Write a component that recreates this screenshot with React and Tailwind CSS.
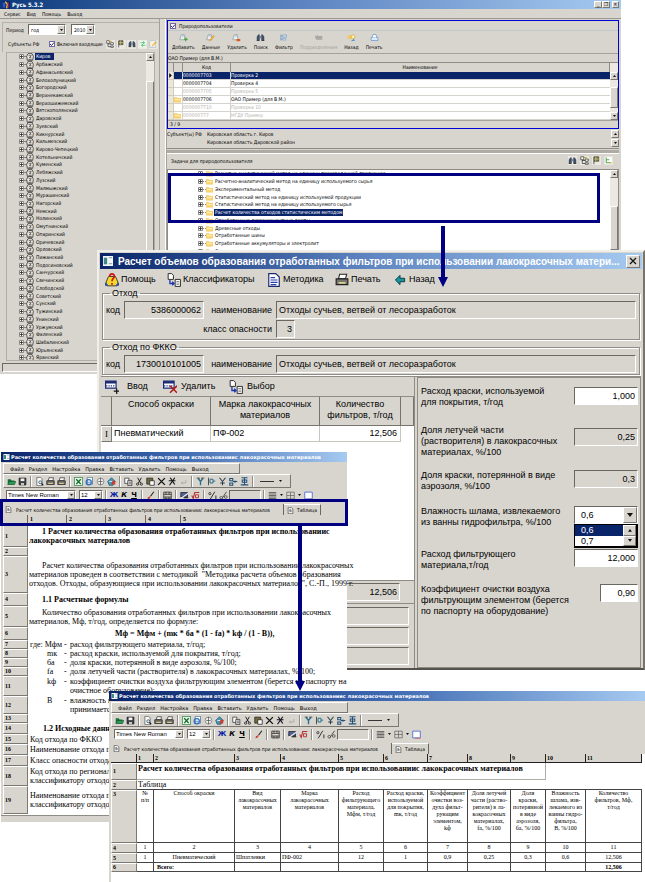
import React from "react";

const UI = "font-['DejaVu_Sans_Condensed','DejaVu_Sans',sans-serif]";
const WIDE = "font-['DejaVu_Sans',sans-serif]";
const SANS = "font-['Liberation_Sans',Arial,sans-serif]";
const SERIF = "font-['Liberation_Serif','Times_New_Roman',serif]";
const SUNKEN = "border border-t-[#6b6862] border-l-[#6b6862] border-b-white border-r-white";
const RAISED = "border border-t-white border-l-white border-b-[#7b7872] border-r-[#7b7872]";

/* ---------- icons, all on a 12 x 12 grid ---------- */
const sheet = <path d="M2.5 .5h5l2 2v9h-7z" fill="#fff" stroke="#555" />;
const people = (
  <>
    <path d="M1 9l2-7h4l1 7z" fill="#e9eef2" stroke="#8fa0a8" />
    <circle cx="5" cy="3.500" r="1.500" fill="#b8c6cc" />
  </>
);
const ICONS = {
  add: (<>{people}<path d="M9 6v5M6.500 8.500h5" stroke="#49a93c" strokeWidth="1.800" /></>),
  edit: (<>{people}<path d="M4 10l6-7 1.500 1.500-6 6z" fill="#f5b443" stroke="#d48518" strokeWidth=".5" /></>),
  del: (<>{people}<path d="M6 8h5v3H6z" fill="#e05a28" /></>),
  find: (<><path d="M1 10V5l2-3h2v8zM7 10V2h2l2 3v5z" fill="#3f4e62" /><path d="M5 4h2v3H5z" fill="#75849a" /><path d="M1 10h3.500M7.500 10H11" stroke="#222" /></>),
  filter: (<><path d="M2.500 2v8M2.500 4h7M2.500 8h6" stroke="#6a92bd" fill="none" /><path d="M5 2.500h5v3H5zM5 7h4v2.500H5z" fill="#cfe0f2" stroke="#6a92bd" strokeWidth=".7" /></>),
  group: (<path d="M1 4l4-1 1 1h5v5H3z" fill="#a9a8a6" />),
  back2: (<><path d="M1 3h5v5H1z" fill="#f0c95c" /><circle cx="8" cy="5" r="2.500" fill="#fff3c0" stroke="#d7a83a" /><path d="M5 11l4-3 2 2z" fill="#3c8ad4" /></>),
  print2: (<><path d="M1.500 6h9v4h-9z" fill="#dcebfb" stroke="#6b94cf" /><path d="M3 6l1-4h4l1 4" fill="#fff" stroke="#6b94cf" /></>),
  flagTree: (<><path d="M1 1h4v4H1zM7 4h4v3H7zM7 9h4v2H7z" fill="#fff" stroke="#333" /><path d="M3 5v5h4M3 6h4" stroke="#333" fill="none" /><path d="M5 2h3v2" stroke="#b9a52c" strokeWidth="1.400" fill="none" /></>),
  flag: (<><path d="M2.500 1v10" stroke="#333" /><path d="M3 1h6v6H3z" fill="#80793a" stroke="#333" strokeWidth=".8" /><path d="M5 1v6M3 4h6" stroke="#e6df9d" strokeWidth=".8" /></>),
  swap: (<><path d="M1 1h10v10H1z" fill="#eefbf0" /><path d="M2 4h6M6 2l2.500 2L6 6M10 8H4M6 6.500L3.500 8 6 10" stroke="#34ad54" fill="none" /></>),
  pencil: (<><path d="M1 1h9v10H1z" fill="#fdf5db" stroke="#9db5d4" /><path d="M4 9l6-7 1.500 1.500-6 6z" fill="#f1a832" /></>),
  treeGreen: (<><path d="M1 1h10v10H1z" fill="#fff" stroke="#cfcfc4" strokeWidth=".5" /><path d="M3 2v7h5M3 5h4" stroke="#47a347" fill="none" strokeWidth="1.300" /><path d="M8 8h2v2H8z" fill="#e1b82a" /></>),
  region: (<><path d="M2 11L1 5l2-4h6l2 4-1 6z" fill="#eceae6" stroke="#33312f" strokeWidth="1.200" /><path d="M4 4h4l-3 3h3M3.500 9.500h5" stroke="#33312f" fill="none" /></>),
  folder: (<><path d="M.5 2.500h4l1 1.500h6v6.500H.5z" fill="#ffd973" stroke="#e9b23c" strokeWidth=".8" /><path d="M2 6h8" stroke="#fff3c4" strokeWidth="1.500" /></>),
  open: (<><path d="M1 3h4l1 1.500h4V10H1z" fill="#13713b" /><path d="M3 6h9l-2 4H1z" fill="#2b9a56" stroke="#123d22" strokeWidth=".6" /></>),
  save: (<><path d="M1.500 1.500h9v9h-9z" fill="#3d3f46" stroke="#17181b" /><path d="M3.500 2h5v3.500h-5z" fill="#f3f3f3" /><path d="M4 8h4v3H4z" fill="#c8c8c8" /></>),
  preview: (<>{sheet}<circle cx="7" cy="7" r="2" fill="#d6ecf7" stroke="#2b4e6b" /><path d="M8.500 8.500L11 11" stroke="#111" strokeWidth="1.500" /></>),
  print: (<><path d="M4 1h6l-1 4H3z" fill="#fff" stroke="#222" strokeWidth=".9" /><path d="M1 5h10v5H1z" fill="#77756c" stroke="#222" /><path d="M3 8.500h6" stroke="#efe9a5" strokeWidth="1.200" /></>),
  excel: (<><path d="M.5.5h11v11H.5z" fill="#e8f6e9" stroke="#1c7a35" /><path d="M3 3l6 6.500M9 3L3 9.500" stroke="#15682b" strokeWidth="1.800" /></>),
  web: (<><path d="M3 .5h7v9H3z" fill="#fff" stroke="#4b6c94" /><circle cx="5" cy="7" r="3.500" fill="none" stroke="#2a6cc0" strokeWidth="1.500" /><path d="M2 7h6" stroke="#2a6cc0" /></>),
  globe: (<><circle cx="6" cy="6" r="4.500" fill="#f0f0ee" stroke="#777" /><path d="M6 1v10M3 6h6" stroke="#555" /></>),
  mail: (<><path d="M1 6l5-5 5 5-3 5H3z" fill="#3aa1c2" stroke="#1e4c60" /><path d="M6 5h5v5H6z" fill="#c93d35" /><path d="M3 6h4" stroke="#fff" /></>),
  copy: (<><path d="M1 1.500h5.500v7H1z" fill="#fff" stroke="#333" /><path d="M5 4.500h5.500v7H5z" fill="#d9d9d9" stroke="#333" /><path d="M6.500 7h3M6.500 9h3" stroke="#333" strokeWidth=".7" /></>),
  cut: (<><path d="M3.500 1l4 7M8.500 1l-4 7" stroke="#111" strokeWidth="1.200" /><circle cx="3.500" cy="9.500" r="1.500" fill="none" stroke="#111" /><circle cx="8.500" cy="9.500" r="1.500" fill="none" stroke="#111" /></>),
  paste: (<><path d="M1 1.500h8v8H1z" fill="#746b3c" stroke="#222" /><path d="M5 5h6v6H5z" fill="#fff" stroke="#222" /></>),
  x: (<path d="M1.500 1.500l9 9M10.500 1.500l-9 9" stroke="#111" strokeWidth="1.800" />),
  clear: (<path d="M3 1l6 9M9 1l-7 10M1 5h9" stroke="#16181f" strokeWidth="1.600" />),
  undo: (<path d="M9 4v4H3M5 6L3 8l2 2" stroke="#a5a29b" fill="none" />),
  colR: (<><path d="M3 2l3 4v5M9 2L6 6" stroke="#26708c" fill="none" strokeWidth="1.800" /><path d="M1 1.500h4M7 1.500h4" stroke="#222" /></>),
  colL: (<><path d="M2 1v10" stroke="#222" /><path d="M4 3h4v5H4zM8 5.500h3" stroke="#26708c" fill="none" strokeWidth="1.300" /></>),
  colX: (<path d="M2 1l4 5 4-5M6 5v6M3 8h6" stroke="#2d3c4b" fill="none" strokeWidth="1.400" />),
  link: (<path d="M1 2h4v3H1zM1 8h4v3H1zM5 6h6M8 4.500v3" stroke="#235079" fill="none" strokeWidth="1.400" />),
  merge: (<path d="M2 1h8M6 1v9M3 4h6v3H3zM1 10.500h10" stroke="#235079" fill="none" strokeWidth="1.400" />),
  brush: (<><path d="M10.500 1L6 7" stroke="#222" strokeWidth="1.500" /><path d="M2 11c0-3 2-4 4-4 0 3-2 4-4 4z" fill="#d13b2a" /></>),
  cells: (<><path d="M1 1.500h10v9H1zM1 4.500h10M1 8h10M4 1.500v3M8 1.500v3M4 8v3M8 8v3" fill="none" stroke="#222" /></>),
  pic: (<><path d="M1 2h9v6H1z" fill="#4b5f95" stroke="#222" /><path d="M1 10L11 3" stroke="#eee" strokeWidth="1.500" /><path d="M5 9h6" stroke="#222" strokeWidth="1.500" /></>),
  root: (<><path d="M1 6l2 4 2-8h6" stroke="#b82d2d" fill="none" strokeWidth="1.400" /><path d="M6 5h4v4H6z" stroke="#b82d2d" strokeWidth="1.200" /></>),
  pct: (<><path d="M9 1L3 11M10.500 6v5" stroke="#222" strokeWidth="1.200" /><circle cx="2.500" cy="3.500" r="1.500" fill="none" stroke="#222" /></>),
  pct2: (<><path d="M10 1L4 10" stroke="#444" strokeWidth="1.200" /><circle cx="3" cy="9" r="1.800" fill="none" stroke="#444" /><circle cx="9" cy="8" r="1.800" fill="none" stroke="#444" /></>),
  lines: (<path d="M1 2h10M1 4h10M1 6h10M1 8h10M1 10h10" stroke="#555" strokeWidth="1.100" />),
  frame: (<path d="M1 1.500h10v9H1zM6 1.500v9M1 6h10" fill="none" stroke="#666" />),
  blueFrame: (<><path d="M1 1.500h10v9H1z" fill="#fff" stroke="#2f56c8" /><path d="M4 11h7" stroke="#d4505f" /></>),
  doc: (<><path d="M2 .5h5l3 3v8H2z" fill="#fff" stroke="#222" /><path d="M4 4h3M4 6h4M4 8h4" stroke="#222" /></>),
  winApp: (<><path d="M0 0h12v12H0z" fill="#f4f7f7" /><path d="M1 2h4v8H1z" fill="#3f8a86" /><path d="M7 2h4M7 9h4" stroke="#97b3b8" strokeWidth="1.500" /></>),
  rus: (<><path d="M0 0h12v12H0z" fill="#10246e" /><path d="M1 2h4v8H1z" fill="#3755c8" /><path d="M5 1l3 4-1 6" stroke="#f1d13b" strokeWidth="2" fill="none" /><path d="M9 2v8" stroke="#c33" strokeWidth="1.500" /></>),
  help: (<><path d="M0 10l3-7h6l3 7-2 1H2z" fill="#f2d92c" stroke="#3b3a1e" strokeWidth=".8" /><path d="M0 11l1-3 2 3zM12 11l-1-3-2 3z" fill="#2c50b5" /><path d="M4 3c0-3 4-3 4 0 0 1.500-2 1.500-2 4M6 8.500v1.500" stroke="#d4161b" strokeWidth="1.500" fill="none" /></>),
  classif: (<><path d="M1 .5h3l1.500 1.500v3.500H1z" fill="#fff" stroke="#222" strokeWidth=".8" /><path d="M7 5.500h4.500v6H7z" fill="#fff" stroke="#222" strokeWidth=".8" /><path d="M8 7.500h2.500M8 9.500h2.500" stroke="#222" strokeWidth=".6" /><path d="M2.500 6v3H6M4.500 7.500L6 9l-1.500 1.500" stroke="#1d35b5" fill="none" strokeWidth="1.100" /></>),
  method: (<><path d="M1.500 .5h6l3 3v8h-9z" fill="#fff" stroke="#1a2b6e" /><path d="M3 4h4M3 6h6M3 8h6M3 10h5" stroke="#2841a8" /></>),
  arrowL: (<path d="M2 6l4-4v2.500h4v3H6V10z" fill="#1b929c" stroke="#083b40" strokeWidth=".8" />),
  rowAdd: (<><path d="M.5 1h9v6h-9z" fill="#fff" stroke="#1b2a75" /><path d="M.5 2h9" stroke="#1b2a75" strokeWidth="2" /><path d="M1 5h8" stroke="#1b2a75" strokeDasharray="1 1" /><path d="M10 7v5M7.500 9.500h5" stroke="#111" /></>),
  rowDel: (<><path d="M.5 1h9v6h-9z" fill="#fff" stroke="#1b2a75" /><path d="M.5 2h9" stroke="#1b2a75" strokeWidth="2" /><path d="M1 5h8" stroke="#1b2a75" strokeDasharray="1 1" /><path d="M6 5l6 6M12 5l-6 6" stroke="#b01919" strokeWidth="1.300" /></>),
};

function Icon({ name, className = "size-[9px]" }) {
  return (
    <svg viewBox="0 0 12 12" fill="none" aria-hidden="true" className={`shrink-0 ${className}`}>
      {ICONS[name]}
    </svg>
  );
}

function Caret({ up = false, className = "w-1" }) {
  return (
    <svg viewBox="0 0 6 4" aria-hidden="true" className={`shrink-0 ${className}`}>
      <path d={up ? "M0 4h6L3 0z" : "M0 0h6L3 4z"} fill="#111" />
    </svg>
  );
}

function ScrollButton({ up, label }) {
  return (
    <button aria-label={label} className={`flex h-[8px] w-full shrink-0 items-center justify-center bg-[#d8d5ce] ${RAISED}`}>
      <Caret up={up} className="w-[3px]" />
    </button>
  );
}

function Select({ label, options, className, textClass = "", arrow = "w-[8px]", id }) {
  return (
    <span className={`relative flex items-center bg-white ${SUNKEN} ${className}`}>
      <select id={id} aria-label={label} className={`h-full w-full appearance-none bg-transparent outline-none ${textClass}`}>
        {options.map((o) => (
          <option key={o}>{o}</option>
        ))}
      </select>
      <span className={`pointer-events-none absolute inset-y-0 right-0 flex items-center justify-center bg-[#d8d5ce] ${RAISED} ${arrow}`}>
        <Caret className="w-1/2" />
      </span>
    </span>
  );
}

/* ---------- main window ---------- */
const DISTRICTS = [
  "Киров", "Арбажский", "Афанасьевский", "Белохолуницкий", "Богородский", "Верхнекамский", "Верхошижемский",
  "Вятскополянский", "Даровской", "Зуевский", "Кикнурский", "Кильмезский", "Кирово-Чепецкий", "Котельничский",
  "Куменский", "Лебяжский", "Лузский", "Малмыжский", "Мурашинский", "Нагорский", "Немский", "Нолинский",
  "Омутнинский", "Опаринский", "Оричевский", "Орловский", "Пижанский", "Подосиновский", "Санчурский",
  "Свечинский", "Слободской", "Советский", "Сунский", "Тужинский", "Унинский", "Уржумский", "Фаленский",
  "Шабалинский", "Юрьянский", "Яранский",
];

const USERS = [
  { code: "0000007703", name: "Проверка 2", state: "selected" },
  { code: "0000007704", name: "Проверка 4" },
  { code: "0000007705", name: "Проверка 5", state: "muted" },
  { code: "0000007706", name: "ОАО Пример (для В.М.)", folder: true },
  { code: "0000007710", name: "Проверка 10", state: "muted" },
  { code: "000000777", name: "НГДУ Пример", state: "muted", folder: true },
];

const TASKS = [
  "Расчетно-аналитический метод на единицу произведенной продукции",
  "Расчетно-аналитический метод на единицу используемого сырья",
  "Экспериментальный метод",
  "Статистический метод на единицу используемой продукции",
  "Статистический метод на единицу используемого сырья",
  "Расчет количества отходов статистическим методом",
  "Отработанные люминесцентные лампы",
  "Древесные отходы",
  "Отработанные шины",
  "Отработанные аккумуляторы и электролит",
  "Отходы и осадки сточных вод",
];

const USER_ACTIONS = [
  ["Добавить", "add"], ["Данные", "edit"], ["Удалить", "del"], ["Поиск", "find"],
  ["Фильтр", "filter"], ["Подразделения", "group"], ["Назад", "back2"], ["Печать", "print2"],
];

function Expander() {
  return (
    <svg viewBox="0 0 5 5" aria-hidden="true" className="size-[5px] shrink-0">
      <path d="M.5.5h4v4h-4z" fill="#fff" stroke="#8a8782" />
      <path d="M1 2.500h3M2.500 1v3" stroke="#222" strokeWidth=".8" />
    </svg>
  );
}

function DistrictPanel() {
  return (
    <aside className="flex w-[160px] shrink-0 flex-col border-r border-[#a5a29b] pt-[3px] pl-[2px]">
      <div className="flex h-[14px] items-center border-t border-l border-[#b5b2ab] pl-[3px]">
        <label htmlFor="period" className="w-[22px]">Период</label>
        <Select id="period" options={["год"]} className="h-[11px] w-[38px]" textClass="pl-[2px]" />
        <Select label="Год" options={["2010"]} className="ml-[5px] h-[11px] w-[24px]" textClass="pl-[2px]" />
      </div>
      <div className="flex h-[16px] items-center border-l border-[#b5b2ab] pl-[5px]">
        <span className="w-[41px]">Субъекты РФ</span>
        <label className="flex items-center gap-[2px]">
          <CheckBox />
          Включая входящие
        </label>
        <div className="ml-[3px] flex flex-1 justify-between pr-px">
          {["flagTree", "flag", "find", "swap", "pencil"].map((n) => (
            <button key={n} aria-label={n} className="flex size-[9px] items-center justify-center bg-[#ebe8e2]">
              <Icon name={n} className="size-[8px]" />
            </button>
          ))}
        </div>
      </div>
      <div className="mx-[4px] flex h-[309px] overflow-hidden border border-[#b0ada6]">
        <ul className="flex h-[309px] flex-1 flex-col pl-[12px]">
          {DISTRICTS.map((d, i) => (
            <li key={d} className="flex min-h-0 flex-1 items-center">
              <Expander />
              <span className="w-[2px] border-t border-dotted border-[#8a8782]" />
              <Icon name="region" className="size-[8px]" />
              <span className={i === 0 ? "ml-px bg-[#0a246a] px-px pr-[4px] leading-[7px] text-white" : "ml-px px-px leading-[7px]"}>{d}</span>
            </li>
          ))}
        </ul>
        <div className="flex w-[8px] flex-col bg-[#ece9e3]">
          <ScrollButton up label="Прокрутить вверх" />
          <div className="h-[20px]" />
          <div className={`flex-1 bg-[#d8d5ce] ${RAISED}`} />
        </div>
      </div>
      <div className={`mt-[2px] h-[9px] ${SUNKEN}`} />
    </aside>
  );
}

function CheckBox() {
  return (
    <span className="relative flex">
      <input type="checkbox" defaultChecked className="size-[6px] appearance-none border border-[#76a] bg-white" />
      <svg viewBox="0 0 6 6" aria-hidden="true" className="pointer-events-none absolute inset-0 size-[6px]">
        <path d="M1 3l1.500 1.500L5 1.500" fill="none" stroke="#1d2b64" />
      </svg>
    </span>
  );
}

function UserTable() {
  return (
    <div className="flex border-t border-[#8f8c86]">
      <table className="min-w-0 flex-1 table-fixed border-separate border-spacing-0 bg-white text-left leading-[7px]">
        <colgroup>
          <col className="w-[6px]" />
          <col className="w-[9px]" />
          <col className="w-[48px]" />
          <col />
        </colgroup>
        <thead>
          <tr className="h-[9px] bg-[#d8d5ce] text-center">
            <th className="border-r border-[#8f8c86] p-0" aria-label="Указатель" />
            <th className="border-r border-[#8f8c86] p-0" aria-label="Тип" />
            <th className="border-r border-[#8f8c86] p-0 font-normal">Код</th>
            <th className="border-r border-[#8f8c86] p-0 font-normal">Наименование</th>
          </tr>
        </thead>
        <tbody>
          {USERS.map((u) => (
            <tr key={u.code} className={u.state === "selected" ? "h-[8px] bg-[#0a246a] text-white" : u.state === "muted" ? "h-[8px] text-[#b4b2ae]" : "h-[8px]"}>
              <td className="border-r border-b border-[#cfccc4] bg-[#eae8d8] p-0 pl-px">
                {u.state === "selected" && (
                  <svg viewBox="0 0 3 6" className="h-[5px] w-[3px]"><path d="M0 0l3 3-3 3z" fill="#000" /></svg>
                )}
              </td>
              <td className="border-r border-b border-[#d5d3cd] p-0">{u.folder && <Icon name="folder" className="size-[7px]" />}</td>
              <td className="border-r border-b border-[#d5d3cd] p-0">{u.code}</td>
              <td className="border-b border-[#d5d3cd] p-0">{u.name}</td>
            </tr>
          ))}
        </tbody>
      </table>
      <div className="flex w-[8px] shrink-0 flex-col bg-[#ece9e3] pt-[9px]">
        <ScrollButton up label="Вверх" />
        <div className="h-[7px]" />
        <div className={`flex-1 bg-[#d8d5ce] ${RAISED}`} />
        <div className="h-[4px]" />
        <ScrollButton label="Вниз" />
      </div>
    </div>
  );
}

function MainWindow() {
  return (
    <section className={`absolute top-0 left-0 flex h-[374px] w-[621px] flex-col bg-[#d8d5ce] text-[5px] leading-[8px] whitespace-nowrap text-black ${UI}`}>
      <header className="flex h-[9px] shrink-0 items-center bg-linear-to-r from-[#0a3a7c] via-[#5f86c2] to-[#a6caf0] px-[2px] text-white">
        <Icon name="rus" className="size-[8px]" />
        <h1 className="ml-[2px] flex-1 text-[6px] font-bold">Русь 5.3.2</h1>
        {["_", "❐", "✕"].map((g, i) => (
          <button key={g} aria-label={["Свернуть", "Восстановить", "Закрыть"][i]} className={`flex h-[7px] items-center justify-center bg-[#d8d5ce] text-[5px] leading-none font-bold text-black ${RAISED} ${i === 2 ? "ml-[2px] w-[7px]" : "w-[8px]"}`}>
            {g}
          </button>
        ))}
      </header>
      <nav className="flex h-[10px] shrink-0 items-center gap-[6px] border-b border-[#9b9892] pl-[4px]">
        {["Сервис", "Вид", "Помощь", "Выход"].map((m) => (
          <button key={m}>{m}</button>
        ))}
      </nav>
      <div className="flex min-h-0 flex-1">
        <DistrictPanel />
        <div className="w-[6px] shrink-0 border-r border-white bg-[#dfdcd6]" />
        <div className="flex min-w-0 flex-1 flex-col border-l border-[#a5a29b] pt-px pr-[2px]">
          <fieldset className="flex flex-col border border-[#0000d8]">
            <label className="flex h-[10px] items-center gap-[3px] border-b border-[#bfc6cc] pl-[2px]">
              <CheckBox />
              Природопользователи
            </label>
            <div className="flex h-[23px] items-center gap-[7px] border-b border-[#a5a29b] pl-[4px]">
              {USER_ACTIONS.map(([label, icon]) => (
                <button key={label} className={label === "Подразделения" ? "flex flex-col items-center gap-px text-[#a3a09a]" : "flex flex-col items-center gap-px"}>
                  <Icon name={icon} className="size-[9px]" />
                  {label}
                </button>
              ))}
            </div>
            <p className="h-[8px]">ОАО Пример (для В.М.)</p>
            <UserTable />
            <p className="h-[8px] border-t border-[#a5a29b] pl-[2px] leading-[7px]">3 / 9</p>
          </fieldset>
          <div className="flex h-[20px] shrink-0 border-b border-[#8f8c86] pt-px">
            <span className="w-[40px]">Субъект(ы) РФ</span>
            <div className="h-[18px] flex-1 overflow-hidden">
              <p>Кировская область г. Киров</p>
              <p>Кировская область Даровской район</p>
              <p>Кировская область Верхнекамский район</p>
            </div>
            <div className="flex w-[8px] flex-col justify-between pb-px">
              <ScrollButton up label="Вверх" />
              <ScrollButton label="Вниз" />
            </div>
          </div>
          <div className="mt-px h-[3px] shrink-0 bg-[#aeaba5]" />
          <div className="flex h-[16px] shrink-0 items-center border-t border-white pr-[6px] pb-[2px] pl-[4px]">
            <h2 className="flex-1">Задачи для природопользователя</h2>
            <div className="flex gap-[3px]">
              {["find", "flagTree", "flag", "treeGreen"].map((n) => (
                <button key={n} aria-label={n} className="size-[9px] bg-[#ebe8e2]"><Icon name={n} className="size-[9px]" /></button>
              ))}
            </div>
          </div>
          <div className="flex h-[82px] shrink-0 overflow-hidden border border-[#8f8c86] bg-white">
            <ul className="flex h-[85px] flex-1 flex-col pl-[30px]">
              {TASKS.map((t, i) => (
                <li key={t} className="flex min-h-0 flex-1 items-center">
                  <Expander />
                  <span className="w-[3px] border-t border-dotted border-[#8a8782]" />
                  <Icon name="folder" className="size-[7px]" />
                  <span className={i === 5 ? "ml-px bg-[#0a246a] px-px leading-[7px] text-white" : "ml-px px-px leading-[7px]"}>{t}</span>
                </li>
              ))}
            </ul>
            <div className="flex w-[8px] flex-col bg-[#ece9e3]">
              <ScrollButton up label="Вверх" />
              <div className="h-[28px]" />
              <div className={`flex-1 bg-[#d8d5ce] ${RAISED}`} />
            </div>
          </div>
        </div>
      </div>
    </section>
  );
}

/* ---------- calculation dialog ---------- */
function Field({ label, value, className = "" }) {
  return (
    <input aria-label={label} defaultValue={value} className={`h-[18px] px-[2px] outline-none ${SUNKEN} ${className}`} />
  );
}

function ToolButton({ icon, children, className = "gap-[3px]" }) {
  return (
    <button className={`flex items-center ${className}`}>
      <Icon name={icon} className="size-[14px]" />
      {children}
    </button>
  );
}

function WasteGroup({ title, code, danger }) {
  return (
    <fieldset className="mx-[3px] border border-[#8f8c86] px-[3px] pt-[3px] pb-px shadow-[inset_1px_1px_0_#fff,1px_1px_0_#fff]">
      <legend className="ml-[4px] px-[2px] leading-[9px]">{title}</legend>
      <div className="grid grid-cols-[18px_80px_72px_1fr] items-center gap-y-px">
        <span>код</span>
        <Field label={`${title}: код`} value={code} className="w-full text-right" />
        <span className="pr-[4px] text-right">наименование</span>
        <Field label={`${title}: наименование`} value="Отходы сучьев, ветвей от лесоразработок" className="w-full" />
        {danger && (
          <>
            <span className="col-span-3 pr-[4px] text-right">класс опасности</span>
            <Field label="класс опасности" value={danger} className="w-[19px] text-right" />
          </>
        )}
      </div>
    </fieldset>
  );
}

function Param({ id, lines, value, rowClass, inputClass }) {
  return (
    <div className={`flex items-start justify-between ${rowClass}`}>
      <label htmlFor={id}>
        {lines.map((l) => (
          <span key={l} className="block">{l}</span>
        ))}
      </label>
      <input id={id} defaultValue={value} className={`h-[18px] px-[2px] text-right outline-none ${SUNKEN} ${inputClass}`} />
    </div>
  );
}

function CalcDialog() {
  return (
    <section className={`absolute top-[250px] right-0 left-[97px] flex h-[420px] flex-col border-2 border-t-[#f1efea] border-r-[#77746e] border-b-[#55524d] border-l-[#f1efea] bg-[#d8d5ce] text-[9px] leading-[11px] whitespace-nowrap text-black ${SANS}`}>
      <header className="mx-px mt-px flex h-[16px] shrink-0 items-center bg-linear-to-r from-[#0a246a] via-[#5f86c2] to-[#a6caf0] px-[2px] text-white">
        <Icon name="winApp" className="h-[10px] w-[12px]" />
        <h2 className="ml-[4px] min-w-0 flex-1 text-[10px] font-bold">
          Расчет объемов образования отработанных фильтров при использовании лакокрасочных матери...
        </h2>
        <button aria-label="Закрыть" className={`flex h-[13px] w-[14px] shrink-0 items-center justify-center bg-[#d8d5ce] ${RAISED}`}>
          <Icon name="x" className="size-[8px]" />
        </button>
      </header>
      <nav className="flex h-[20px] shrink-0 items-center pt-px pl-[6px]">
        <ToolButton icon="help" className="w-[62px] gap-[2px]">Помощь</ToolButton>
        <ToolButton icon="classif" className="w-[100px] gap-[2px]">Классификаторы</ToolButton>
        <ToolButton icon="method" className="w-[68px] gap-[2px]">Методика</ToolButton>
        <ToolButton icon="print" className="w-[58px] gap-[2px]">Печать</ToolButton>
        <ToolButton icon="arrowL" className="gap-[2px]">Назад</ToolButton>
      </nav>
      <WasteGroup title="Отход" code="5386000062" danger="3" />
      <div className="h-[3px] shrink-0" />
      <WasteGroup title="Отход по ФККО" code="1730010101005" />
      <div className="mx-[2px] mt-px flex min-h-0 flex-1 border-t border-[#8f8c86]">
        <div className="flex w-[314px] shrink-0 flex-col border-r border-[#8f8c86]">
          <nav className="flex h-[20px] shrink-0 items-center border-b border-[#8f8c86] pl-[4px]">
            <ToolButton icon="rowAdd" className="w-[58px] gap-[8px]">Ввод</ToolButton>
            <ToolButton icon="rowDel" className="w-[66px] gap-[4px]">Удалить</ToolButton>
            <ToolButton icon="classif" className="gap-[4px]">Выбор</ToolButton>
          </nav>
          <div className="flex-1 bg-white">
            <table className="w-full table-fixed border-separate border-spacing-0">
              <colgroup>
                <col className="w-[11px]" />
                <col className="w-[99px]" />
                <col className="w-[109px]" />
                <col className="w-[81px]" />
                <col />
              </colgroup>
              <thead className="bg-[#d8d5ce]">
                <tr className="h-[29px] align-top">
                  <th className="border-r border-b border-[#77746e] p-0" aria-label="Указатель" />
                  <th className="border-r border-b border-[#77746e] p-0 pt-[2px] font-normal">Способ окраски</th>
                  <th className="border-r border-b border-[#77746e] p-0 pt-[2px] font-normal">Марка лакокрасочных<br />материалов</th>
                  <th className="border-r border-b border-[#77746e] p-0 pt-[2px] font-normal">Количество<br />фильтров, т/год</th>
                  <th className="border-r border-b border-[#77746e] p-0" aria-label="Пусто" />
                </tr>
              </thead>
              <tbody>
                <tr className="h-[16px]">
                  <td className={`bg-[#d8d5ce] p-0 text-center ${SERIF} ${RAISED}`}>I</td>
                  <td className="border-r border-b border-[#c8c5be] p-0 pl-[2px]">Пневматический</td>
                  <td className="border-r border-b border-[#c8c5be] p-0 pl-[2px]">ПФ-002</td>
                  <td className="border-r border-b border-[#c8c5be] p-0 pr-[3px] text-right">12,506</td>
                  <td className="p-0" />
                </tr>
              </tbody>
            </table>
          </div>
          <div className="flex h-[24px] shrink-0 justify-end border-t border-b border-[#8f8c86] pt-[2px] pr-[14px]">
            <Field label="Итого фильтров" value="12,506" className="w-[81px] bg-[#d8d5ce] text-right" />
          </div>
          <div className="flex h-[64px] shrink-0 flex-col gap-[2px] pt-[3px] pr-[5px]">
            <Field label="Примечание 1" value="" className="w-full" />
            <Field label="Примечание 2" value="" className="w-full" />
            <Field label="Примечание 3" value="" className="w-full" />
          </div>
        </div>
        <div className="ml-[2px] flex flex-1 flex-col border border-[#8f8c86] pt-[8px] pr-[2px] pl-[3px]">
          <Param id="p1" lines={["Расход краски, используемой", "для покрытия, т/год"]} value="1,000" rowClass="h-[39px]" inputClass="mt-px w-[64px] bg-white" />
          <Param id="p2" lines={["Доля летучей части", "(растворителя) в лакокрасочных", "материалах, %/100"]} value="0,25" rowClass="h-[45px]" inputClass="mt-[3px] w-[64px] bg-transparent" />
          <Param id="p3" lines={["Доля краски, потерянной в виде", "аэрозоля, %/100"]} value="0,3" rowClass="h-[36px]" inputClass="w-[64px] bg-transparent" />
          <div className="flex h-[43px] items-start justify-between">
            <label htmlFor="p4">
              <span className="block">Влажность шлама, извлекаемого</span>
              <span className="block">из ванны гидрофильтра, %/100</span>
            </label>
            <div className="relative">
              <Select id="p4" options={["0,6", "0,7"]} className="h-[18px] w-[64px]" textClass="pl-[6px]" arrow="w-[14px]" />
              <ul role="listbox" aria-label="Значения влажности" className="absolute top-[18px] left-0 flex h-[24px] w-[64px] flex-col border border-t-black border-r-2 border-r-black border-b-2 border-b-black border-l-black bg-white pr-[12px]">
                <li role="option" aria-selected="true" className="flex-1 bg-[#0a246a] pl-[6px] leading-[11px] text-white">0,6</li>
                <li role="option" aria-selected="false" className="flex-1 pl-[6px] leading-[10px]">0,7</li>
                <li aria-hidden="true" className="absolute top-0 right-0 flex h-full w-[13px] flex-col">
                  <span className={`flex flex-1 items-center justify-center bg-[#d8d5ce] ${RAISED}`}><Caret up /></span>
                  <span className={`flex flex-1 items-center justify-center bg-[#d8d5ce] ${RAISED}`}><Caret /></span>
                </li>
              </ul>
            </div>
          </div>
          <Param id="p5" lines={["Расход фильтрующего", "материала,т/год"]} value="12,000" rowClass="h-[35px]" inputClass="w-[64px] bg-white" />
          <Param id="p6" lines={["Коэффициент очистки воздуха", "фильтрующим элементом (берется", "по паспорту на оборудование)"]} value="0,90" rowClass="h-[40px]" inputClass="w-[38px] bg-white" />
        </div>
      </div>
    </section>
  );
}

/* ---------- report editor ---------- */
const EDITOR_TITLE = "Расчет количества образования отработанных фильтров при использованиис лакокрасочных материалов";
const TOOLS = [
  ["open", "save"],
  ["preview", "print", "print"],
  ["excel", "web", "globe", "mail"],
  ["copy", "cut", "paste", "x", "clear", "undo"],
  ["colR", "colL", "colX", "link", "merge"],
];

function Divider() {
  return <span className="mx-[2px] h-[11px] w-[2px] shrink-0 border-l border-[#8f8c86] bg-white" />;
}

function IconButton({ name }) {
  return (
    <button aria-label={name} className="flex w-[11px] shrink-0 items-center justify-center">
      <Icon name={name} className="size-[9px]" />
    </button>
  );
}

function EditorChrome({ label }) {
  return (
    <div className={`flex shrink-0 flex-col bg-[#d8d5ce] text-[5px] leading-[8px] ${WIDE}`}>
      <header className="flex h-[10px] items-center bg-linear-to-r from-[#0a246a] via-[#3c66ae] to-[#a6caf0] pl-[2px] text-white">
        <Icon name="winApp" className="h-[6px] w-[7px]" />
        <h2 className="ml-px font-bold">{EDITOR_TITLE}</h2>
      </header>
      <nav className={`mt-px ml-[2px] flex h-[11px] w-[237px] items-center gap-[5px] pl-[6px] ${RAISED}`}>
        {["Файл", "Раздел", "Настройка", "Правка", "Вставить", "Удалить", "Помощь", "Выход"].map((m) => (
          <button key={m}>{m}</button>
        ))}
      </nav>
      <div className={`ml-[2px] flex h-[14px] w-[288px] items-center pl-[2px] ${RAISED}`}>
        {TOOLS.map((group, i) => (
          <React.Fragment key={i}>
            {group.map((n, j) => (
              <IconButton key={j} name={n} />
            ))}
            <Divider />
          </React.Fragment>
        ))}
        <button aria-label="Тип линии" className="ml-[4px] flex flex-1 items-center gap-[5px]">
          <span className="h-px w-[14px] bg-[#333]" />
          <Caret className="w-[3px]" />
        </button>
      </div>
      <div className="ml-[2px] flex h-[14px] w-[313px] items-center pl-[3px]">
        <Select label={`${label}: шрифт`} options={["Times New Roman"]} className="h-[10px] w-[70px]" textClass={`text-[6px] pl-px ${SANS}`} />
        <Select label={`${label}: размер`} options={["12"]} className="ml-[3px] h-[10px] w-[24px]" textClass={`text-[6px] pl-px ${SANS}`} />
        <Divider />
        <button className="w-[10px] text-[7px] font-bold text-[#0a1fa8]">Ж</button>
        <button className="w-[10px] text-[7px] font-bold italic">К</button>
        <button className="w-[10px] text-[7px] font-bold underline">Ч</button>
        <Divider />
        <IconButton name="brush" />
        <Divider />
        <IconButton name="cells" />
        <Divider />
        <IconButton name="pic" />
        <IconButton name="root" />
        <Divider />
        <IconButton name="pct" />
        <IconButton name="pct2" />
        <span className={`h-[11px] w-[32px] ${SUNKEN}`} />
        <Divider />
        <IconButton name="lines" />
        <Caret className="mx-[2px] w-[3px]" />
        <IconButton name="frame" />
        <Caret className="mx-[2px] w-[3px]" />
        <IconButton name="blueFrame" />
      </div>
      <div role="tablist" className={`flex h-[13px] items-end pl-[2px] ${UI}`}>
        <button role="tab" aria-selected="false" className="flex h-[11px] w-[281px] shrink-0 items-center gap-[4px] border-r border-[#6b6862] pl-[2px]">
          <Icon name="doc" className="size-[7px]" />
          {EDITOR_TITLE}
        </button>
        <button role="tab" aria-selected="true" className="flex h-[11px] items-center gap-[3px] border-t border-r border-t-white border-r-[#6b6862] px-[3px]">
          <Icon name="doc" className="size-[7px]" />
          Таблица
        </button>
      </div>
    </div>
  );
}

function Term({ name, children }) {
  return (
    <div className="grid grid-cols-[34px_6px_1fr]">
      <span className={name.startsWith("где") ? "" : "pl-[17px]"}>{name}</span>
      <span>-</span>
      <span>{children}</span>
    </div>
  );
}

const REPORT_ROWS = [
  ["h-[22px]", "font-bold", "1 Расчет количества образования отработанных фильтров при использованиис", "лакокрасочных материалов"],
  ["h-[9px]", "", ""],
  ["h-[37px]", "", "Расчет количества образования отработанных фильтров при использовании лакокрасочных", "материалов проведен в соответствии с методикой\u00a0 \"Методика расчета объемов образования", "отходов. Отходы, образующиеся при использовании лакокрасочных материалов\", С.-П., 1999 г."],
  ["h-[13px]", "font-bold", "1.1 Расчетные формулы"],
  ["h-[21px]", "", "Количество образования отработанных фильтров при использовании лакокрасочных", "материалов, Мф, т/год, определяется по формуле:"],
];

function RowHead({ n }) {
  return <th className={`bg-[#d8d5ce] p-0 pl-px text-left text-[6px] leading-[7px] font-bold ${RAISED}`}>{n}</th>;
}

function ReportWindow() {
  let n = REPORT_ROWS.length;
  const rest = [
    ["h-[13px]", <p className="pl-[85px] font-bold">Мф = Мфм + (mк * ба * (1 - fa) * kф / (1 - В)),</p>],
    ["h-[9px]", <Term name="где: Мфм">расход фильтрующего материала, т/год;</Term>],
    ["h-[9px]", <Term name="mк">расход краски, используемой для покрытия, т/год;</Term>],
    ["h-[9px]", <Term name="ба">доля краски, потерянной в виде аэрозоля, %/100;</Term>],
    ["h-[9px]", <Term name="fa">доля летучей части (растворителя) в лакокрасочных материалах, %/100;</Term>],
    ["h-[20px]", <Term name="kф">коэффициент очистки воздуха фильтрующим элементом (берется по паспорту на<br />очистное оборудование);</Term>],
    ["h-[18px]", <Term name="В">влажность шлама,<br />принимается</Term>],
    ["h-[9px]", ""],
    ["h-[11px]", <p className="pl-[13px] font-bold">1.2 Исходные данные</p>],
    ["h-[10px]", "Код отхода по ФККО"],
    ["h-[11px]", "Наименование отхода по"],
    ["h-[11px]", "Класс опасности отхода"],
    ["h-[20px]", <>Код отхода по регионал<br />классификатору отходов</>],
    ["h-[28px]", <>Наименование отхода по<br />классификатору отходов</>],
  ];
  return (
    <section className="absolute top-[452px] left-px flex h-[370px] w-[346px] flex-col bg-[#d8d5ce] whitespace-nowrap text-black">
      <EditorChrome label="Отчет" />
      <div className={`flex h-[10px] shrink-0 overflow-hidden border-b border-[#6b6862] pl-[2px] text-[6px] leading-[8px] font-bold ${SERIF}`}>
        {["w-[25px]", "w-[39px]", "w-[39px]", "w-[40px]", "w-[35px]", "flex-1"].map((w, i) => (
          <span key={i} className={`border-r border-[#6b6862] pl-[2px] ${w}`}>{i || ""}</span>
        ))}
      </div>
      <div className="ml-[2px] flex-1 bg-white">
        <table className={`w-full table-fixed border-separate border-spacing-0 text-[8px] leading-[9px] ${SERIF}`}>
          <colgroup>
            <col className="w-[25px]" />
            <col />
          </colgroup>
          <tbody>
            {REPORT_ROWS.map(([h, cls, ...lines], i) => (
              <tr key={i} className={h}>
                <RowHead n={i + 1} />
                <td className={`p-0 pl-px ${cls}`}>
                  {lines.map((l, j) => (
                    <p key={j} className={j === 0 ? "indent-[13px]" : "indent-0"}>{l}</p>
                  ))}
                </td>
              </tr>
            ))}
            {rest.map(([h, body]) => {
              n += 1;
              return (
                <tr key={n} className={h}>
                  <RowHead n={n} />
                  <td className="p-0 pl-[2px]">{body}</td>
                </tr>
              );
            })}
          </tbody>
        </table>
      </div>
      <div className="h-[7px] shrink-0 border-t border-[#8f8c86]" />
    </section>
  );
}

/* ---------- table editor ---------- */
const COLS = ["w-[26px]", "w-[17px]", "w-[81px]", "w-[46px]", "w-[58px]", "w-[45px]", "w-[44px]", "w-[40px]", "w-[43px]", "w-[35px]", "w-[40px]", "w-[56px]"];
const HEADS = [
  ["№", "п/п"],
  ["Способ окраски"],
  ["Вид", "лакокрасочных", "материалов"],
  ["Марка", "лакокрасочных", "материалов"],
  ["Расход", "фильтрующего", "материала,", "Мфм, т/год"],
  ["Расход краски,", "используемой", "для покрытия,", "mк, т/год"],
  ["Коэффициент", "очистки воз-", "духа фильт-", "рующим", "элементом,", "kф"],
  ["Доля летучей", "части (раство-", "рителя) в ла-", "кокрасочных", "материалах,", "fa, %/100"],
  ["Доля", "краски,", "потерянной", "в виде", "аэрозоля,", "ба, %/100"],
  ["Влажность", "шлама, изв-", "лекаемого из", "ванны гидро-", "фильтра,", "В, %/100"],
  ["Количество", "фильтров, Мф,", "т/год"],
];
const VALUES = ["1", "Пневматический", "Шпатлевки", "ПФ-002", "12", "1", "0,9", "0,25", "0,3", "0,6", "12,506"];
const CELL = "border-r border-b border-[#444] p-0";

function TableWindow() {
  return (
    <section className="absolute top-[691px] right-0 left-[109px] flex h-[191px] flex-col overflow-hidden bg-[#d8d5ce] whitespace-nowrap text-black">
      <EditorChrome label="Таблица" />
      <div className="ml-[2px] flex-1 bg-white">
        <table className={`w-[531px] table-fixed border-separate border-spacing-0 text-center text-[6px] leading-[7px] ${SERIF}`}>
          <colgroup>
            {COLS.map((c, i) => (
              <col key={i} className={c} />
            ))}
          </colgroup>
          <thead>
            <tr className="h-[9px] bg-[#d8d5ce] text-left">
              {COLS.map((c, i) => (
                <th key={i} className="border-r border-b border-[#222] p-0 pl-px font-bold">{i || ""}</th>
              ))}
            </tr>
          </thead>
          <tbody>
            <tr className="h-[17px]">
              <RowHead n={1} />
              <td colSpan={9} className="border-r border-b border-[#b0ada6] p-0 pl-px text-left align-top text-[8px] leading-[11px] font-bold">{EDITOR_TITLE}</td>
              <td colSpan={2} className="p-0" />
            </tr>
            <tr className="h-[10px]">
              <RowHead n={2} />
              <td colSpan={11} className="border-b border-[#444] p-0 pl-px text-left text-[8px] leading-[9px]">Таблица</td>
            </tr>
            <tr className="h-[53px] align-top">
              <RowHead n={3} />
              {HEADS.map((lines, i) => (
                <td key={i} className={CELL}>
                  {lines.map((l) => (
                    <span key={l} className="block">{l}</span>
                  ))}
                </td>
              ))}
            </tr>
            <tr className="h-[10px]">
              <RowHead n={4} />
              {HEADS.map((_, i) => (
                <td key={i} className={CELL}>{i + 1}</td>
              ))}
            </tr>
            <tr className="h-[10px]">
              <RowHead n={5} />
              {VALUES.map((v, i) => (
                <td key={i} className={i === 2 || i === 3 ? `${CELL} pl-px text-left` : CELL}>{v}</td>
              ))}
            </tr>
            <tr className="h-[9px] font-bold">
              <RowHead n={6} />
              {HEADS.map((_, i) => (
                <td key={i} className={i === 1 ? `${CELL} pl-[3px] text-left` : CELL}>{i === 1 ? "Всего:" : i === 10 ? "12,506" : ""}</td>
              ))}
            </tr>
          </tbody>
        </table>
      </div>
    </section>
  );
}

export default function App() {
  return (
    <main className="relative h-[882px] w-full overflow-hidden bg-white">
      <MainWindow />
      <CalcDialog />
      <ReportWindow />
      <TableWindow />
      <div className="pointer-events-none absolute top-[173px] left-[168px] h-[50px] w-[432px] border-3 border-[#000080]" />
      <div className="pointer-events-none absolute top-[499px] left-0 h-[27px] w-[348px] border-3 border-[#000080]" />
      <svg viewBox="0 0 10 62" aria-hidden="true" className="pointer-events-none absolute top-[226px] left-[438px] h-[62px] w-[10px]">
        <path d="M3 0h4v51h3L5 61 0 51h3z" fill="#000080" />
      </svg>
      <svg viewBox="0 0 12 167" aria-hidden="true" className="pointer-events-none absolute top-[525px] left-[294px] h-[167px] w-[12px]">
        <path d="M4 0h4v156h3L6 166 1 156h3z" fill="#000080" />
      </svg>
    </main>
  );
}
